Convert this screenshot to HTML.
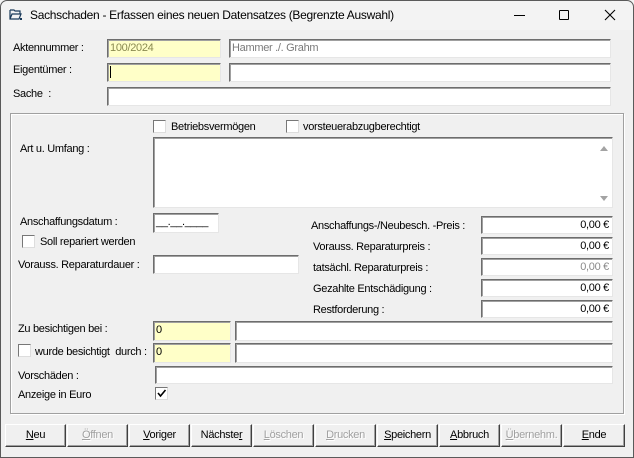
<!DOCTYPE html>
<html><head><meta charset="utf-8"><style>
*{box-sizing:border-box;margin:0;padding:0}
body{width:634px;height:458px;overflow:hidden;background:#f0f0f0;font-family:"Liberation Sans",sans-serif;font-size:11px;color:#000;position:relative}
.win{position:absolute;left:0;top:0;width:634px;height:458px;background:#f0f0f0;overflow:hidden}
.frame{position:absolute;left:0;top:0;width:634px;height:458px;border:1px solid #5a5a5a;border-radius:7px 7px 0 0;pointer-events:none}
.title{position:absolute;left:0;top:0;width:634px;height:30px;background:#f3f3f3}
.t{position:absolute;white-space:nowrap;letter-spacing:-0.3px}
.in{position:absolute;background:#fff;border:1px solid;border-color:#6d6d6d #e6e6e6 #e6e6e6 #6d6d6d;box-shadow:inset 1px 1px 0 #a0a0a0;padding:2px 2px;font-size:11px;white-space:nowrap;overflow:hidden;letter-spacing:-0.3px}
.y{background:#ffffc8}
.r{text-align:right;padding-right:3px}
.cb{position:absolute;width:13px;height:13px;background:#fff;border:1px solid;border-color:#777 #ddd #ddd #777}
.grp{position:absolute;left:10px;top:113px;width:614px;height:301px;border:1px solid #a0a0a0;box-shadow:1px 1px 0 #fff inset,1px 1px 0 #fff}
.btn{position:absolute;top:424px;height:23px;width:61px;background:#f0f0f0;border:1px solid;border-color:#fff #404040 #404040 #fff;box-shadow:inset -1px -1px 0 #a0a0a0;text-align:center;line-height:20px;font-size:11px;letter-spacing:-0.3px}
.dis{color:#a0a0a0;text-shadow:1px 1px 0 #fff}
u{text-decoration:underline}
</style></head><body><div class="win">
<div class="title">
<svg style="position:absolute;left:9px;top:9px" width="13" height="12" viewBox="0 0 13 12"><path d="M1 1h4l1 1h5v3M1 1v9h9l2-5H3l-2 5" fill="none" stroke="#1a3a5a" stroke-width="1.2"/><rect x="11" y="9" width="2" height="2" fill="#1a3a5a"/></svg>
<div class="t" style="left:30px;top:8px;font-size:12px">Sachschaden - Erfassen eines neuen Datensatzes (Begrenzte Auswahl)</div>
<div style="position:absolute;left:514px;top:15px;width:11px;height:1px;background:#000"></div>
<div style="position:absolute;left:559px;top:10px;width:10px;height:10px;border:1px solid #000;border-radius:1px"></div>
<svg style="position:absolute;left:604px;top:9px" width="12" height="12"><path d="M1 1L11 11M11 1L1 11" stroke="#000" stroke-width="1.1"/></svg>
</div>

<div class="t" style="left:13px;top:42px">Aktennummer :</div>
<div class="in y" style="left:107px;top:39px;width:114px;height:19px;color:#8a8a50">100/2024</div>
<div class="in" style="left:229px;top:39px;width:382px;height:19px;color:#7a7a7a">Hammer ./. Grahm</div>
<div class="t" style="left:13px;top:64px">Eigentümer :</div>
<div class="in y" style="left:107px;top:63px;width:114px;height:19px"><span style="display:inline-block;width:1px;height:12px;background:#000"></span></div>
<div class="in" style="left:229px;top:63px;width:382px;height:19px"></div>
<div class="t" style="left:13px;top:88px">Sache&nbsp; :</div>
<div class="in" style="left:107px;top:87px;width:504px;height:19px"></div>

<div class="grp"></div>
<div class="cb" style="left:153px;top:120px"></div><div class="t" style="left:171px;top:121px">Betriebsvermögen</div>
<div class="cb" style="left:286px;top:120px"></div><div class="t" style="left:303px;top:121px">vorsteuerabzugberechtigt</div>
<div class="t" style="left:20px;top:143px">Art u. Umfang :</div>
<div class="in" style="left:153px;top:137px;width:460px;height:71px"></div>
<svg style="position:absolute;left:598px;top:144px" width="12" height="60"><path d="M2 7L6 2L10 7Z" fill="#a3a3a3"/><path d="M2 52L6 57L10 52Z" fill="#a3a3a3"/></svg>

<div class="t" style="left:20px;top:216px">Anschaffungsdatum :</div>
<div class="in" style="left:153px;top:213px;width:66px;height:20px">__.__.____</div>
<div class="cb" style="left:22px;top:235px"></div><div class="t" style="left:40px;top:236px">Soll repariert werden</div>
<div class="t" style="left:18px;top:259px">Vorauss. Reparaturdauer :</div>
<div class="in" style="left:153px;top:255px;width:146px;height:19px"></div>

<div class="t" style="left:311px;top:220px">Anschaffungs-/Neubesch. -Preis :</div>
<div class="t" style="left:313px;top:241px">Vorauss. Reparaturpreis :</div>
<div class="t" style="left:313px;top:262px">tatsächl. Reparaturpreis :</div>
<div class="t" style="left:313px;top:283px">Gezahlte Entschädigung :</div>
<div class="t" style="left:313px;top:304px">Restforderung :</div>
<div class="in r" style="left:481px;top:216px;width:132px;height:18px">0,00 €</div>
<div class="in r" style="left:481px;top:237px;width:132px;height:18px">0,00 €</div>
<div class="in r" style="left:481px;top:258px;width:132px;height:18px;color:#8a8a8a">0,00 €</div>
<div class="in r" style="left:481px;top:279px;width:132px;height:18px">0,00 €</div>
<div class="in r" style="left:481px;top:300px;width:132px;height:18px">0,00 €</div>

<div class="t" style="left:18px;top:323px">Zu besichtigen bei :</div>
<div class="in y" style="left:153px;top:321px;width:78px;height:20px">0</div>
<div class="in" style="left:235px;top:321px;width:378px;height:20px"></div>
<div class="cb" style="left:18px;top:344px"></div><div class="t" style="left:35px;top:346px">wurde besichtigt&nbsp; durch :</div>
<div class="in y" style="left:153px;top:343px;width:78px;height:20px">0</div>
<div class="in" style="left:235px;top:343px;width:378px;height:20px"></div>
<div class="t" style="left:18px;top:370px">Vorschäden :</div>
<div class="in" style="left:155px;top:366px;width:458px;height:18px"></div>
<div class="t" style="left:18px;top:389px">Anzeige in Euro</div>
<div class="cb" style="left:155px;top:387px"></div>
<svg style="position:absolute;left:157px;top:389px" width="10" height="9"><path d="M1 4L3.5 7L8.5 1" fill="none" stroke="#000" stroke-width="1.6"/></svg>

<div class="btn" style="left:5px"><u>N</u>eu</div>
<div class="btn dis" style="left:67px"><u>Ö</u>ffnen</div>
<div class="btn" style="left:129px"><u>V</u>origer</div>
<div class="btn" style="left:191px">Nächste<u>r</u></div>
<div class="btn dis" style="left:253px"><u>L</u>öschen</div>
<div class="btn dis" style="left:315px"><u>D</u>rucken</div>
<div class="btn" style="left:377px"><u>S</u>peichern</div>
<div class="btn" style="left:439px"><u>A</u>bbruch</div>
<div class="btn dis" style="left:501px"><u>Ü</u>bernehm.</div>
<div class="btn" style="left:563px;width:62px"><u>E</u>nde</div>
</div><div class="frame"></div></body></html>
